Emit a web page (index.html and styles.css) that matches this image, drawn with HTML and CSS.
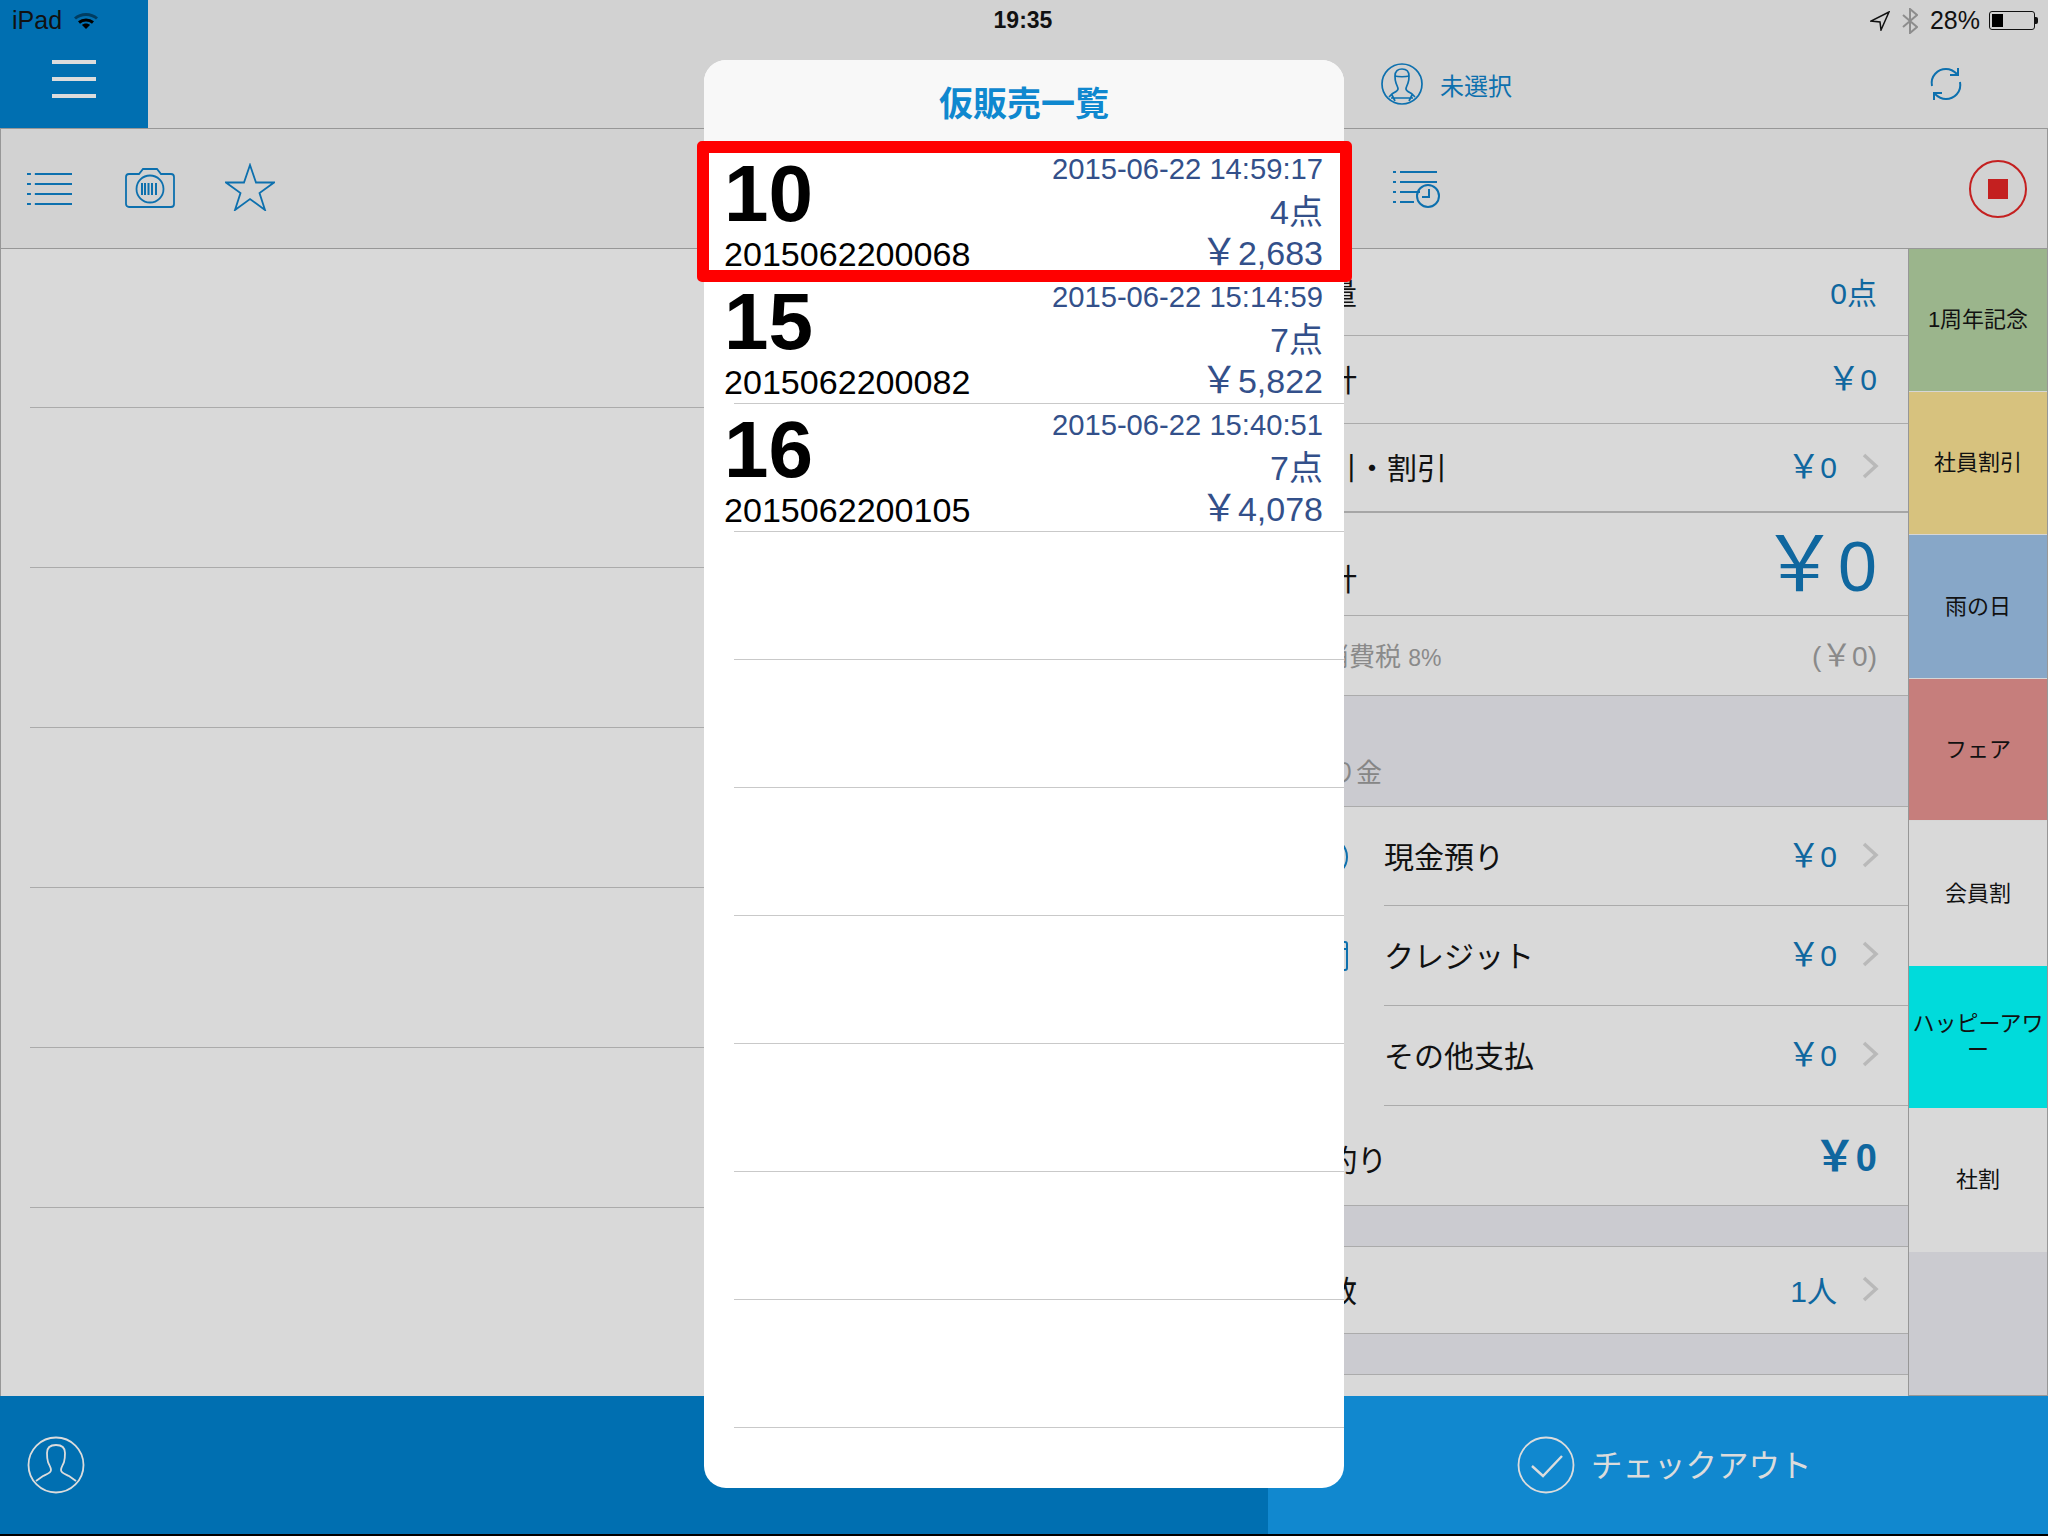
FILE: index.html
```html
<!DOCTYPE html>
<html lang="ja">
<head>
<meta charset="utf-8">
<title>仮販売一覧</title>
<link rel="stylesheet" href="styles.css">
</head>
<body>
<div class="screen">
  <header class="topbar">
    <div class="brand">
      <div class="burger"><i></i><i></i><i></i></div>
    </div>
    <div class="customer">
      <svg class="ic-42" viewBox="0 0 42 42" fill="none" stroke="#0d70ae" stroke-width="1.7"><circle cx="21" cy="21" r="20"/><path d="M14 13c0-5 3-7 7-7s7 2 7 7c0 3 0 5-1 7-1 3-2 4-2 6 0 2 3 3 6 5l3 3M14 13c0 3 0 5 1 7 1 3 2 4 2 6 0 2-3 3-6 5l-3 3M14 13c3 1 11 1 14 0M11 32l3 6M31 32l-3 6M10 35h22"/></svg>
      <span class="customer-name">未選択</span>
    </div>
    <svg class="refresh" viewBox="0 0 34 34" fill="none" stroke="#0d70ae" stroke-width="2"><path d="M3 19C1 9 9 2 17 2c4 0 8 2 11 5M31 15c2 10-6 17-14 17-4 0-8-2-11-5"/><path d="M21 8h8V1M13 26H5v7"/></svg>
  </header>

  <div class="toolbar">
    <svg class="tb-list" viewBox="0 0 46 34" fill="none" stroke="#0d70ae" stroke-width="2" preserveAspectRatio="none"><path d="M0 2h4M8 2h38M0 12h4M8 12h38M0 22h4M8 22h38M0 32h4M8 32h38"/></svg>
    <svg class="tb-camera" viewBox="0 0 50 40" fill="none" stroke="#0d70ae" stroke-width="1.8"><path d="M4 6h10l4-5h14l4 5h10a3 3 0 0 1 3 3v27a3 3 0 0 1-3 3H4a3 3 0 0 1-3-3V9a3 3 0 0 1 3-3z"/><circle cx="25" cy="21" r="13.500"/><path d="M17 15v12M20 15v12M23.500 15v12M27 15v12M31 15v12" stroke-width="2"/></svg>
    <svg class="tb-star" viewBox="0 0 50 48" fill="none" stroke="#0d70ae" stroke-width="1.8"><path d="M25 2l6 17.500h18L34.500 30 40 47 25 36 10 47l5.500-17L1 19.500h18z"/></svg>
    <svg class="tb-history" viewBox="0 0 48 38" fill="none" stroke="#0d70ae" stroke-width="2"><path d="M0 2h3M7 2h37M0 12h3M7 12h37M0 22h3M7 22h20M0 32h3M7 32h14"/><circle cx="35" cy="26" r="11"/><path d="M36 19v8h-7"/></svg>
    <div class="stop"><span class="stop-square"></span></div>
  </div>

  <main class="content">
    <section class="list">
      <div class="list-row"></div><div class="list-row"></div><div class="list-row"></div>
      <div class="list-row"></div><div class="list-row"></div><div class="list-row"></div>
    </section>

    <section class="summary">
      <div class="row h87"><span class="label">数量</span><span class="val">0点</span></div>
      <div class="row h88"><span class="label">小計</span><span class="val money"><span class="yen">&#xFFE5;</span>0</span></div>
      <div class="row h89 strong-line"><span class="label">値引・割引</span><span class="val money"><span class="yen">&#xFFE5;</span>0</span><svg class="chev" viewBox="0 0 17 26" fill="none" stroke="#b9b9b9" stroke-width="3.500"><path d="M2 2l12 11L2 24"/></svg></div>
      <div class="row h103"><span class="label label-low">合計</span><span class="val val-xl"><span class="yen">&#xFFE5;</span>0</span></div>
      <div class="row h80 muted"><span class="label label-sm">内消費税 <small>8%</small></span><span class="val val-paren">(<span class="yen">&#xFFE5;</span>0)</span></div>
      <div class="section h111"><span class="label label-sec">お預り金</span></div>
      <div class="row pay h99">
        <svg class="pay-ic" viewBox="0 0 40 40" fill="none" stroke="#0d70ae" stroke-width="2"><circle cx="20" cy="20" r="19"/></svg>
        <span class="pay-body"><span class="label">現金預り</span><span class="val money"><span class="yen">&#xFFE5;</span>0</span><svg class="chev" viewBox="0 0 17 26" fill="none" stroke="#b9b9b9" stroke-width="3.500"><path d="M2 2l12 11L2 24"/></svg></span>
      </div>
      <div class="row pay h100">
        <svg class="pay-ic" viewBox="0 0 40 40" fill="none" stroke="#0d70ae" stroke-width="2"><rect x="2" y="6" width="37" height="28" rx="2"/><path d="M2 13h37"/></svg>
        <span class="pay-body"><span class="label">クレジット</span><span class="val money"><span class="yen">&#xFFE5;</span>0</span><svg class="chev" viewBox="0 0 17 26" fill="none" stroke="#b9b9b9" stroke-width="3.500"><path d="M2 2l12 11L2 24"/></svg></span>
      </div>
      <div class="row pay h100">
        <span class="pay-ic"></span>
        <span class="pay-body"><span class="label">その他支払</span><span class="val money"><span class="yen">&#xFFE5;</span>0</span><svg class="chev" viewBox="0 0 17 26" fill="none" stroke="#b9b9b9" stroke-width="3.500"><path d="M2 2l12 11L2 24"/></svg></span>
      </div>
      <div class="row h100 change"><span class="label label-change">お釣り</span><span class="val val-bold"><span class="yen">&#xFFE5;</span>0</span></div>
      <div class="section h41"></div>
      <div class="row h87"><span class="label">客数</span><span class="val">1人</span><svg class="chev" viewBox="0 0 17 26" fill="none" stroke="#b9b9b9" stroke-width="3.500"><path d="M2 2l12 11L2 24"/></svg></div>
      <div class="section h41"></div>
      <div class="row-tail"></div>
    </section>

    <aside class="promos">
      <div class="promo green">1周年記念</div>
      <div class="promo yellow">社員割引</div>
      <div class="promo blue">雨の日</div>
      <div class="promo red">フェア</div>
      <div class="promo plain">会員割</div>
      <div class="promo cyan">ハッピーアワ<br>ー</div>
      <div class="promo plain plain-last">社割</div>
      <div class="promo-empty"></div>
    </aside>
  </main>

  <footer class="bottom">
    <div class="bottom-left">
      <svg class="ic-58" viewBox="0 0 58 58" fill="none" stroke="#dcdcdc" stroke-width="1.800"><circle cx="29" cy="29" r="27.500"/><path d="M20 17c0-6 4-8 9-8s9 2 9 8c0 4 0 6-1 9-1 3-3 5-3 8 0 3 4 4 8 6l7 5M20 17c0 4 0 6 1 9 1 3 3 5 3 8 0 3-4 4-8 6l-7 5"/></svg>
    </div>
    <div class="bottom-right">
      <svg class="ic-58" viewBox="0 0 58 58" fill="none" stroke="#dcdcdc" stroke-width="1.800"><circle cx="29" cy="29" r="27.500"/><path d="M15 30l11 10 19-20" stroke-width="2.400"/></svg>
      <span class="checkout">チェックアウト</span>
    </div>
  </footer>

  <div class="status">
    <span class="st-left">iPad
      <svg class="wifi" viewBox="0 0 24 18" fill="none" stroke="#000"><path d="M1 6.500C7 1 17 1 23 6.500" stroke-width="3" stroke-opacity=".45"/><path d="M5 10.500c4-3.500 10-3.500 14 0" stroke-width="3"/><path d="M12 17l-4-4c2-2 6-2 8 0z" fill="#000" stroke="none"/></svg>
    </span>
    <span class="st-time">19:35</span>
    <span class="st-right">
      <svg class="st-loc" viewBox="0 0 20 20" fill="none" stroke="#111" stroke-width="1.500"><path d="M19 1L1 10l9 1 1 8z"/></svg>
      <svg class="st-bt" viewBox="0 0 16 26" fill="none" stroke="#8d8d8d" stroke-width="2"><path d="M1 7l14 12-7 6V1l7 6L1 19"/></svg>
      <span>28%</span>
      <span class="battery"><span class="battery-fill"></span></span>
    </span>
  </div>

  <div class="modal">
    <div class="modal-title">仮販売一覧</div>
    <div class="sale">
      <div><div class="sale-no">10</div><div class="sale-code">2015062200068</div></div>
      <div class="sale-info"><div class="sale-date">2015-06-22 14:59:17</div><div class="sale-qty">4点</div><div class="sale-price"><span class="yen">&#xFFE5;</span>2,683</div></div>
    </div>
    <div class="sale">
      <div><div class="sale-no">15</div><div class="sale-code">2015062200082</div></div>
      <div class="sale-info"><div class="sale-date">2015-06-22 15:14:59</div><div class="sale-qty">7点</div><div class="sale-price"><span class="yen">&#xFFE5;</span>5,822</div></div>
    </div>
    <div class="sale">
      <div><div class="sale-no">16</div><div class="sale-code">2015062200105</div></div>
      <div class="sale-info"><div class="sale-date">2015-06-22 15:40:51</div><div class="sale-qty">7点</div><div class="sale-price"><span class="yen">&#xFFE5;</span>4,078</div></div>
    </div>
    <div class="sale"></div><div class="sale"></div><div class="sale"></div><div class="sale"></div>
    <div class="sale"></div><div class="sale"></div><div class="sale"></div>
  </div>

  <div class="highlight"></div>
</div>
</body>
</html>
```

FILE: styles.css
```css
* { box-sizing: border-box; }
html, body { margin: 0; padding: 0; }
body { font-family: "Liberation Sans", "Noto Sans CJK JP", sans-serif; color: #111; background: #000; }
.screen { position: relative; width: 2048px; height: 1536px; overflow: hidden; display: flex; flex-direction: column; background: #000; padding-bottom: 2px; }

/* top */
.topbar { height: 129px; flex: none; display: flex; background: #d2d2d2; border-bottom: 1px solid #979797; }
.brand { width: 148px; height: 128px; background: #006fb1; padding: 60px 0 0 52px; flex: none; }
.burger { width: 44px; display: flex; flex-direction: column; gap: 13px; }
.burger i { display: block; height: 4px; background: #dcdcdc; }
.customer { display: flex; align-items: center; gap: 17px; margin: 40px 0 0 1233px; height: 88px; }
.ic-42 { width: 42px; height: 42px; }
.customer-name { font-size: 24px; color: #0d70ae; }
.refresh { width: 34px; height: 34px; margin: 67px 85px 0 auto; }

/* toolbar */
.toolbar { height: 120px; flex: none; display: flex; align-items: center; background: #d2d2d2; border: solid #979797; border-width: 0 1px 1px; padding-left: 26px; }
.tb-list { width: 45px; height: 34px; flex: none; }
.tb-camera { width: 50px; height: 40px; margin: 0 0 2px 53px; flex: none; }
.tb-star { width: 50px; height: 48px; margin: 0 0 4px 50px; flex: none; }
.tb-history { width: 48px; height: 38px; margin-left: 1118px; flex: none; }
.stop { width: 58px; height: 58px; margin-left: auto; margin-right: 20px; border: 2px solid #c42020; border-radius: 50%; display: flex; align-items: center; justify-content: center; flex: none; }
.stop-square { width: 20px; height: 20px; background: #c42020; }

/* content */
.content { flex: none; height: 1147px; display: flex; background: #d9d9d9; border-left: 1px solid #979797; border-right: 1px solid #979797; }
.list { width: 1267px; flex: none; padding-left: 29px; }
.list-row { height: 160px; border-bottom: 1px solid #ababab; }
.list-row:first-child { height: 159px; }

.summary { width: 640px; flex: none; display: flex; flex-direction: column; }
.row, .section { flex: none; display: flex; align-items: center; padding: 0 31px 3px 29px; border-bottom: 1px solid #ababab; }
.h87 { height: 87px; } .h88 { height: 88px; } .h89 { height: 89px; } .h103 { height: 103px; } .h80 { height: 80px; }
.h111 { height: 111px; } .h99 { height: 99px; } .h100 { height: 100px; } .h41 { height: 41px; }
.strong-line { border-bottom-width: 2px; border-bottom-color: #a6a6a6; }
.section { background: #cbcbd0; align-items: flex-end; padding-bottom: 0; }
.row-tail { flex: 1; }
.label { font-size: 30px; color: #111; margin-right: auto; white-space: nowrap; }
.val { font-size: 30px; color: #0f679f; white-space: nowrap; }
.money { margin-top: 4px; }
.yen { font-family: "Noto Sans CJK JP", sans-serif; font-size: 1.1em; line-height: 0; }
.chev { width: 17px; height: 26px; margin: 0 -2px 0 25px; flex: none; }
.label-low { margin-top: 28px; }
.val-xl { font-size: 70px; margin-top: 8px; }
.muted .label, .muted .val { color: #8a8a8a; }
.label-sm { font-size: 26px; }
.label-sm small { font-size: 23px; }
.val-paren { font-size: 28px; margin-top: 6px; }
.label-sec { font-size: 26px; color: #868686; margin: 0 0 17px -19px; }
.pay { padding: 0; border-bottom: 0; }
.pay-ic { width: 40px; height: 40px; flex: none; margin-left: 40px; }
.pay-body { flex: 1; align-self: stretch; display: flex; align-items: center; margin-left: 36px; padding: 0 31px 3px 0; border-bottom: 1px solid #ababab; }
.change .label-change { margin-top: 8px; }
.val-bold { font-weight: 700; font-size: 38px; margin-top: 8px; }

/* promo strip */
.promos { flex: 1; display: flex; flex-direction: column; border-left: 1px solid #979797; }
.promo { height: 143px; flex: none; display: flex; align-items: center; justify-content: center; text-align: center; font-size: 22px; line-height: 26px; color: #111; border-bottom: 1px solid #d6d6d6; }
.green { background: #9bb58c; } .yellow { background: #d7c27e; } .blue { background: #87a7c8; height: 144px; } .red { background: #c67e7c; height: 142px; }
.plain { background: #d9d9d9; border-bottom: 0; height: 145px; } .plain-last { height: 144px; } .cyan { background: #00dbdb; border-bottom: 0; height: 142px; }
.promo-empty { flex: 1; background: #cbcbd0; border-bottom: 1px solid #979797; }

/* bottom */
.bottom { flex: 1; display: flex; }
.bottom-left { width: 1268px; background: #006fb1; padding-left: 27px; display: flex; align-items: center; }
.bottom-right { flex: 1; background: #1188cf; display: flex; align-items: center; padding-left: 249px; gap: 16px; }
.ic-58 { width: 58px; height: 58px; flex: none; }
.checkout { font-size: 31.500px; color: #dcdcdc; margin-bottom: 4px; }

/* overlays */
.status { position: absolute; left: 0; top: 0; width: 2048px; height: 40px; font-size: 25px; color: #111; }
.st-left { position: absolute; left: 12px; top: 6px; display: flex; align-items: center; gap: 12px; }
.wifi { width: 24px; height: 18px; }
.st-time { position: absolute; left: 0; right: 2px; top: 7px; text-align: center; font-weight: 700; font-size: 23px; }
.st-right { position: absolute; right: 13px; top: 6px; display: flex; align-items: center; gap: 12px; }
.st-loc { width: 20px; height: 20px; }
.st-bt { width: 16px; height: 26px; }
.battery { position: relative; width: 46px; height: 19px; border: 1px solid #111; border-radius: 3px; padding: 2px; margin-left: -3px; }
.battery::after { content: ""; position: absolute; right: -4px; top: 5px; width: 3px; height: 7px; background: #111; border-radius: 0 2px 2px 0; }
.battery-fill { display: block; width: 11px; height: 13px; background: #000; }

.modal { position: absolute; left: 704px; top: 60px; width: 640px; height: 1428px; background: #fff; border-radius: 22px; overflow: hidden; }
.modal-title { height: 88px; background: #f8f8f8; text-align: center; font-size: 34px; font-weight: 700; line-height: 88px; color: #0f88cf; }
.sale { height: 128px; display: flex; justify-content: space-between; padding: 0 21px 0 20px; background: linear-gradient(#c9c9c9, #c9c9c9) 30px 100% / 100% 1px no-repeat; }
.sale-no { font-size: 80px; font-weight: 700; line-height: 92px; margin-bottom: -6px; color: #000; }
.sale-code { font-size: 34.100px; line-height: 40px; color: #000; }
.sale-info { text-align: right; color: #33508a; }
.sale-date { font-size: 29.200px; line-height: 43px; }
.sale-qty { font-size: 34px; line-height: 43px; }
.sale-price { font-size: 34px; line-height: 39px; }

.highlight { position: absolute; left: 697px; top: 141px; width: 655px; height: 141px; border: 12px solid #f00; border-radius: 5px; }
```
